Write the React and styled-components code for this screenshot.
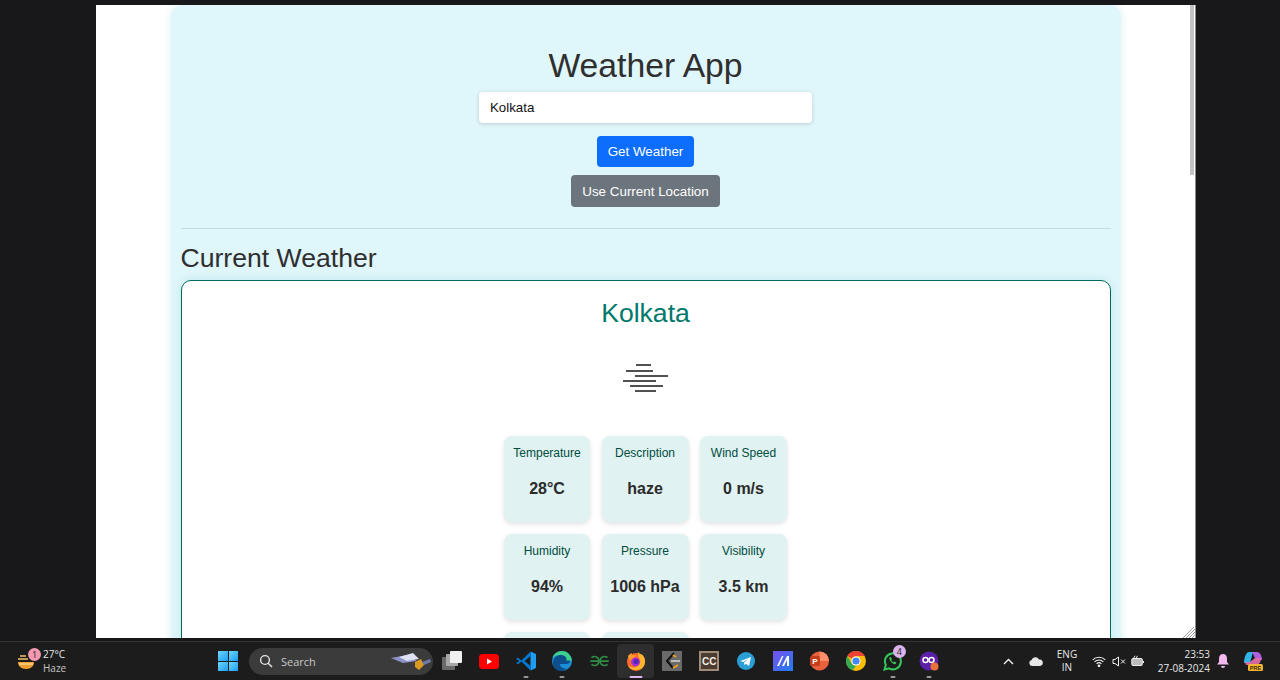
import React from "react";
import styled, { createGlobalStyle } from "styled-components";

const Global = createGlobalStyle`
  html, body { margin: 0; padding: 0; background: #18181a; overflow: hidden; }
  * { box-sizing: border-box; }
`;

const Desktop = styled.div`
  width: 1280px;
  height: 680px;
  display: flex;
  flex-direction: column;
  overflow: hidden;
  background: #18181a;
`;
const WindowArea = styled.div`
  height: 641px;
  padding: 5px 84px 3px 96px;
`;
const Browser = styled.div`
  position: relative;
  width: 1100px;
  height: 633px;
  background: #fff;
  overflow: hidden;
  border-right: 1px solid #8c8c8c;
`;
const Scrollbar = styled.div`
  position: absolute;
  top: 0;
  right: 1px;
  width: 4px;
  height: 170px;
  background: #c4c4c4;
`;
const Grip = styled.svg`
  position: absolute;
  right: 0;
  bottom: 0;
`;
const Card = styled.main`
  width: 950px;
  margin: 0 auto;
  padding: 39px 10px 0;
  min-height: 800px;
  background: #dff6fa;
  border-radius: 12px;
  box-shadow: 0 0 10px rgba(0, 140, 160, 0.14);
  font-family: "Liberation Sans", Arial, sans-serif;
  color: #2f2f2f;
`;
const Title = styled.h1`
  margin: 0 0 5px;
  font-size: 33.7px;
  line-height: 43px;
  font-weight: 400;
  text-align: center;
`;
const SearchForm = styled.div`
  display: flex;
  flex-direction: column;
  align-items: center;
`;
const CityInput = styled.input`
  width: 333px;
  height: 31px;
  padding: 0 11px;
  border: 0;
  border-radius: 4px;
  background: #fff;
  box-shadow: 0 1px 4px rgba(0, 0, 0, 0.16);
  font: 13.3px "Liberation Sans", Arial, sans-serif;
  color: #111;
  outline: none;
`;
const Button = styled.button`
  height: ${(p) => (p.$secondary ? "32px" : "31px")};
  margin-top: ${(p) => (p.$secondary ? "8px" : "13px")};
  padding: 0 11px;
  border: 0;
  border-radius: 4px;
  background: ${(p) => (p.$secondary ? "#6c757d" : "#0d6efd")};
  color: #fff;
  font: 13.4px "Liberation Sans", Arial, sans-serif;
`;
const Divider = styled.hr`
  height: 1px;
  margin: 21px 0 12px;
  border: 0;
  background: #c6dde0;
`;
const SectionTitle = styled.h2`
  margin: 0 0 5px;
  font-size: 26.6px;
  line-height: 34px;
  font-weight: 400;
`;
const WeatherBox = styled.section`
  padding: 17px 0 30px;
  background: #fff;
  border: 1px solid #00695c;
  border-radius: 10px;
  box-shadow: 0 0 10px rgba(0, 140, 160, 0.14);
  display: flex;
  flex-direction: column;
  align-items: center;
`;
const City = styled.h3`
  margin: 0 0 34px;
  font-size: 26.6px;
  line-height: 31px;
  font-weight: 400;
  color: #00796b;
`;
const FogIcon = styled.svg`
  display: block;
  margin-bottom: 43px;
`;
const TileGrid = styled.div`
  display: grid;
  grid-template-columns: 86px 87px 87px;
  grid-auto-rows: 86px;
  column-gap: 11.5px;
  row-gap: 12px;
`;
const Tile = styled.div`
  padding-top: 10px;
  border-radius: 8px;
  background: #e0f2f1;
  box-shadow: 0 2px 5px rgba(0, 0, 0, 0.12);
  text-align: center;
`;
const TileLabel = styled.div`
  font-size: 12px;
  line-height: 15px;
  color: #004d40;
`;
const TileValue = styled.div`
  margin-top: 18px;
  font-size: 16px;
  line-height: 20px;
  font-weight: 700;
  color: #2b2b2b;
`;

const Taskbar = styled.footer`
  height: 39px;
  display: flex;
  align-items: center;
  background: #1c1c1c;
  border-top: 1px solid #333;
  font-family: "Open Sans", "Noto Sans", sans-serif;
  color: #e8e8e8;
`;
const WeatherWidget = styled.div`
  width: 218px;
  padding-left: 17px;
  display: flex;
  align-items: center;
  gap: 8px;
`;
const WidgetIcon = styled.div`
  position: relative;
  width: 18px;
  height: 20px;
`;
const Badge = styled.span`
  position: absolute;
  top: ${(p) => p.$top}px;
  right: ${(p) => p.$right}px;
  width: 13px;
  height: 13px;
  border-radius: 50%;
  background: ${(p) => p.$color};
  color: #222;
  font-size: 9px;
  line-height: 13px;
  text-align: center;
`;
const WidgetText = styled.div`
  font-size: 10px;
  line-height: 14px;
`;
const WidgetSub = styled.div`
  color: #c4c4c4;
`;
const StartButton = styled.div`
  width: 20px;
  height: 20px;
  margin-right: 11px;
  display: grid;
  grid-template-columns: 1fr 1fr;
  gap: 1px;
`;
const StartPane = styled.span`
  background: linear-gradient(135deg, #6fd6fa, #1b9df0);
`;
const SearchPill = styled.div`
  width: 184px;
  height: 27px;
  padding: 0 0 0 10px;
  border-radius: 14px;
  background: #3b3b3b;
  display: flex;
  align-items: center;
  gap: 8px;
  font-size: 11px;
  color: #c8c8c8;
`;
const SearchLabel = styled.span`
  flex: 1;
`;
const IconRow = styled.div`
  display: flex;
  align-items: center;
  margin-left: 1px;
`;
const TaskIcon = styled.div`
  position: relative;
  width: 36.7px;
  height: 34px;
  display: flex;
  align-items: center;
  justify-content: center;
  border-radius: 4px;
  background: ${(p) => (p.$active ? "#2e2e2e" : "transparent")};
`;
const RunningBar = styled.span`
  position: absolute;
  bottom: 0;
  left: 50%;
  transform: translateX(-50%);
  width: ${(p) => (p.$active ? "13px" : "5px")};
  height: 2px;
  border-radius: 1px;
  background: ${(p) => (p.$active ? "#e0b8ef" : "#9a9a9a")};
`;
const LetterTile = styled.div`
  width: 20px;
  height: 20px;
  display: flex;
  align-items: center;
  justify-content: center;
  background: #4a3c30;
  border: 2px solid #a08c78;
  color: #f2ede6;
  font: 700 10px "Liberation Sans", sans-serif;
`;
const Tray = styled.div`
  margin-left: auto;
  padding-right: 10px;
  display: flex;
  align-items: center;
`;
const TraySlot = styled.div`
  width: ${(p) => p.$width}px;
  margin-right: ${(p) => p.$after || 0}px;
  display: flex;
  justify-content: center;
  align-items: center;
`;
const LangText = styled.div`
  font-size: 10px;
  line-height: 13px;
  text-align: center;
`;
const Clock = styled.div`
  width: 62px;
  font-size: 10px;
  line-height: 14px;
  text-align: right;
`;

const FOG_LINES = [
  [636, 651, 365],
  [626, 653, 371],
  [635, 668, 376],
  [623, 656, 381],
  [630, 663, 386],
  [635, 656, 391],
];

const STATS = [
  ["Temperature", "28°C"],
  ["Description", "haze"],
  ["Wind Speed", "0 m/s"],
  ["Humidity", "94%"],
  ["Pressure", "1006 hPa"],
  ["Visibility", "3.5 km"],
];

const Fog = () => (
  <FogIcon width="46" height="30" viewBox="623 363 46 30">
    {FOG_LINES.map(([a, b, y]) => (
      <line key={y} x1={a} x2={b} y1={y} y2={y} stroke="#505050" strokeWidth="2" />
    ))}
  </FogIcon>
);

const WidgetHaze = () => (
  <svg width="18" height="20" viewBox="0 0 18 20">
    <path d="M1 11h16c0 4-3 7-8 7s-8-3-8-7z" fill="#f0a030" />
    <path d="M3 5h6M1 8h10" stroke="#f3c36a" strokeWidth="1.6" />
    <path d="M2 13h14" stroke="#fbe0a0" strokeWidth="1.2" />
  </svg>
);

const SearchIcon = () => (
  <svg width="14" height="14" viewBox="0 0 14 14" fill="none" stroke="#e6e6e6" strokeWidth="1.4">
    <circle cx="6" cy="6" r="4.4" />
    <path d="M9.2 9.2L13 13" />
  </svg>
);

const Satellite = () => (
  <svg width="44" height="24" viewBox="0 0 44 24">
    <path d="M2 9l16-3 10 6-14 2z" fill="#8d92c9" />
    <path d="M10 8l14-4 6 6-12 2z" fill="#dfe2f3" />
    <path d="M26 13l6-3 3 6-5 5-4-3z" fill="#d99a24" />
    <path d="M33 13l8-3 1 3-7 3z" fill="#6f7aa8" />
  </svg>
);

const TaskView = () => (
  <svg width="20" height="20" viewBox="0 0 20 20">
    <rect x="0" y="6" width="13" height="13" rx="1" fill="#6a6a6a" />
    <rect x="4" y="3" width="12" height="12" rx="1" fill="#a8a8a8" />
    <rect x="8" y="0" width="12" height="12" rx="1" fill="#f0f0f0" />
  </svg>
);

const YouTube = () => (
  <svg width="20" height="15" viewBox="0 0 20 15">
    <rect width="20" height="15" rx="3.5" fill="#f00" />
    <path d="M8 4.5l5 3-5 3z" fill="#fff" />
  </svg>
);

const VSCode = () => (
  <svg width="20" height="20" viewBox="0 0 20 20">
    <path d="M14.5 0.5L20 3v14l-5.500 2.500z" fill="#1f9cf0" />
    <path d="M14.5 0.5L5.500 9.500 2 6.800 0 8l3.500 2L0 12l2 1.200 3.500-2.700 9 9V15L8.500 10l6-5z" fill="#0078d4" />
  </svg>
);

const Edge = () => (
  <svg width="20" height="20" viewBox="0 0 20 20">
    <circle cx="10" cy="10" r="10" fill="#1a8fd8" />
    <path d="M1 12C1 6 6 3.500 10.500 3.500 15 3.500 18 6.500 18 10c0 2-1.500 3-3.500 3H8c0 3 3 5 6.500 4.500C12.500 19.500 10.500 20 9 20c-4 0-8-3-8-8z" fill="#0c4f8c" />
    <path d="M20 10.500C20 5 15.500 0 10 0 5 0 1.500 3 .5 7 2.500 4.500 6 3.500 9.500 4c4 .5 5.500 3 5 5.500H18c1 0 2 .3 2 1z" fill="#3ecf8e" />
  </svg>
);

const GfG = () => (
  <svg width="21" height="12" viewBox="0 0 21 12" fill="none" stroke="#2f8d46" strokeWidth="1.7">
    <path d="M2.500 2.600A4.500 4.500 0 1 1 2.500 9.400M1.200 6.200H10" />
    <path d="M18.500 2.600A4.500 4.500 0 1 0 18.500 9.400M19.800 6.200H11" />
  </svg>
);

const Firefox = () => (
  <svg width="20" height="20" viewBox="0 0 20 20">
    <circle cx="10" cy="11" r="9" fill="#ff6a2b" />
    <path d="M19 10.500c0 5-4 8.500-9 8.500-3.500 0-6.500-1.500-8-4.500 3 2.500 7.500 2.500 10 .5 2.500-2 3-5 1.500-7.500C12.500 5.500 11.500 3.500 12 1c1 2 4 2 5 3.500 1.300 1.800 2 3.700 2 6z" fill="#ffb52e" />
    <path d="M2 5c1-1.500 2.500-2.500 4-3-.5 1 0 2 .5 2.500 1.500-.7 3-.5 4 .5-2 .5-3 1.500-3.500 2.500L3 9z" fill="#ff9a2e" />
    <circle cx="9.500" cy="11" r="4.400" fill="#a52fd6" />
    <circle cx="10" cy="10.500" r="2.600" fill="#4d2ab0" />
  </svg>
);

const LeetCode = () => (
  <svg width="20" height="20" viewBox="0 0 20 20">
    <rect width="20" height="20" fill="#6a6a6a" />
    <path d="M12 2L5 10l6 7" fill="none" stroke="#111" strokeWidth="2" />
    <path d="M9 10h9" stroke="#d0d0d0" strokeWidth="1.600" />
    <path d="M11 17l5-3M11 4l3 2" stroke="#f0a020" strokeWidth="2" />
  </svg>
);

const Telegram = () => (
  <svg width="18" height="18" viewBox="0 0 18 18">
    <circle cx="9" cy="9" r="9" fill="#2a9fd6" />
    <path d="M3.500 9L14 5l-2 9-3-2.200-1.500 1.500L7 10.500l4.500-3.500L6 10z" fill="#fff" />
  </svg>
);

const Maze = () => (
  <svg width="20" height="20" viewBox="0 0 20 20">
    <defs>
      <linearGradient id="mz" x1="0" y1="0" x2="1" y2="1">
        <stop offset="0" stopColor="#7a4ff0" />
        <stop offset="1" stopColor="#1f7df0" />
      </linearGradient>
    </defs>
    <rect width="20" height="20" fill="url(#mz)" />
    <path d="M4 15L9 5h1.500L6 15zM9 15l5-10h2v10h-2V9l-3 6z" fill="#fff" />
  </svg>
);

const PowerPoint = () => (
  <svg width="20" height="20" viewBox="0 0 20 20">
    <circle cx="10.500" cy="10" r="9.500" fill="#e8603c" />
    <path d="M10.500 .5a9.500 9.500 0 0 1 9.500 9.500h-9.500z" fill="#ff8f6b" />
    <rect x="1" y="5" width="10" height="10" rx="1.500" fill="#c43e1c" />
    <text x="6" y="13" fontSize="8" fontWeight="700" fontFamily="Liberation Sans" fill="#fff" textAnchor="middle">P</text>
  </svg>
);

const Chrome = () => (
  <svg width="20" height="20" viewBox="0 0 20 20">
    <circle cx="10" cy="10" r="10" fill="#fbbc04" />
    <path d="M10 0a10 10 0 0 1 8.660 5H10a5 5 0 0 0-4.330 2.500L1.340 5A10 10 0 0 1 10 0z" fill="#ea4335" />
    <path d="M1.340 5l4.330 7.500A5 5 0 0 0 10 15l-3.600 4.300A10 10 0 0 1 1.340 5z" fill="#34a853" />
    <circle cx="10" cy="10" r="4.600" fill="#fff" />
    <circle cx="10" cy="10" r="3.600" fill="#4285f4" />
  </svg>
);

const WhatsApp = () => (
  <svg width="20" height="20" viewBox="0 0 20 20" fill="none">
    <path d="M1.500 18.500l1.300-4.500A8 8 0 1 1 6 17.300z" stroke="#34c759" strokeWidth="2" />
    <path d="M7 6c-1 1-.8 2.500.8 4.500s3.400 3 4.700 2.500l1-1.200-2-1.300-.9.800c-1-.4-1.900-1.400-2.300-2.400l.7-.9L7.800 6z" fill="#34c759" />
  </svg>
);

const Infinity8 = () => (
  <svg width="20" height="20" viewBox="0 0 20 20">
    <circle cx="10" cy="10" r="9.500" fill="#5b1fa8" />
    <circle cx="6.500" cy="9" r="2.500" fill="none" stroke="#fff" strokeWidth="1.500" />
    <circle cx="12.500" cy="9" r="2.500" fill="none" stroke="#fff" strokeWidth="1.500" />
    <circle cx="15.500" cy="15.500" r="4" fill="#e8703c" />
  </svg>
);

const Chevron = () => (
  <svg width="11" height="7" viewBox="0 0 11 7" fill="none" stroke="#f0f0f0" strokeWidth="1.400">
    <path d="M1 6l4.500-4.500L10 6" />
  </svg>
);

const Cloud = () => (
  <svg width="14" height="9" viewBox="0 0 14 9">
    <path d="M3 9a3 3 0 0 1-.4-5.900A4 4 0 0 1 10 2.500 3.200 3.200 0 0 1 11 9z" fill="#e6e6e6" />
  </svg>
);

const Wifi = () => (
  <svg width="14" height="11" viewBox="0 0 14 11" fill="none" stroke="#f0f0f0" strokeWidth="1.100">
    <path d="M.7 3.800a9 9 0 0 1 12.600 0M2.600 5.800a6.300 6.300 0 0 1 8.800 0M4.600 7.800a3.500 3.500 0 0 1 4.800 0" />
    <circle cx="7" cy="9.800" r=".8" fill="#f0f0f0" />
  </svg>
);

const Mute = () => (
  <svg width="14" height="11" viewBox="0 0 14 11" fill="none" stroke="#f0f0f0" strokeWidth="1">
    <path d="M1 3.500h2L6.500 1v9L3 7.500H1z" />
    <path d="M9 3.500l4 4M13 3.500l-4 4" />
  </svg>
);

const Battery = () => (
  <svg width="14" height="12" viewBox="0 0 14 12" fill="none" stroke="#f0f0f0" strokeWidth="1">
    <rect x=".8" y="3.500" width="10.500" height="7" rx="1" fill="#bcbcbc" />
    <path d="M12.500 6v2M2.500 3.500L4 .8M5 3.500L6.500 .8" />
  </svg>
);

const Bell = () => (
  <svg width="12" height="14" viewBox="0 0 12 14">
    <path d="M6 0c2.600 0 4 2 4 4.500V8l2 2.500H0L2 8V4.500C2 2 3.400 0 6 0z" fill="#f0b8ec" />
    <path d="M4 12h4a2 2 0 0 1-4 0z" fill="#f0b8ec" />
  </svg>
);

const Copilot = () => (
  <svg width="20" height="20" viewBox="0 0 20 20">
    <path d="M6 1h4L7 12H1C1 7 3 1 6 1z" fill="#2fb5e8" />
    <path d="M9 1h5c3 0 5 4 5 8h-6z" fill="#b05fe0" />
    <path d="M2 11h5l5-4h6c0 4-2 7-5 7H3z" fill="#e86fa8" opacity=".9" />
    <rect x="5" y="13" width="15" height="7" rx="1.500" fill="#f2b632" />
    <text x="12.500" y="18.700" fontSize="5.500" fontWeight="700" fontFamily="Liberation Sans" fill="#3a2a05" textAnchor="middle">PRE</text>
  </svg>
);

const TASK_APPS = [
  { key: "view", icon: <TaskView /> },
  { key: "yt", icon: <YouTube /> },
  { key: "code", icon: <VSCode />, running: true },
  { key: "edge", icon: <Edge />, running: true },
  { key: "gfg", icon: <GfG /> },
  { key: "ff", icon: <Firefox />, running: true, active: true },
  { key: "lc", icon: <LeetCode /> },
  { key: "cc", icon: <LetterTile>CC</LetterTile> },
  { key: "tg", icon: <Telegram /> },
  { key: "maze", icon: <Maze /> },
  { key: "ppt", icon: <PowerPoint /> },
  { key: "chrome", icon: <Chrome /> },
  { key: "wa", icon: <WhatsApp />, running: true, badge: "4" },
  { key: "inf", icon: <Infinity8 />, running: true },
];

export default function App() {
  return (
    <Desktop>
      <Global />
      <WindowArea>
        <Browser>
          <Card>
            <Title>Weather App</Title>
            <SearchForm>
              <CityInput defaultValue="Kolkata" />
              <Button>Get Weather</Button>
              <Button $secondary>Use Current Location</Button>
            </SearchForm>
            <Divider />
            <SectionTitle>Current Weather</SectionTitle>
            <WeatherBox>
              <City>Kolkata</City>
              <Fog />
              <TileGrid>
                {STATS.map(([label, value]) => (
                  <Tile key={label}>
                    <TileLabel>{label}</TileLabel>
                    <TileValue>{value}</TileValue>
                  </Tile>
                ))}
                <Tile />
                <Tile />
              </TileGrid>
            </WeatherBox>
          </Card>
          <Scrollbar />
          <Grip width="12" height="11" viewBox="0 0 12 11" stroke="#a0a0a0" strokeWidth="1">
            <path d="M0 11L12 -1M3 11L12 2M6 11l6-6M9 11l3-3" />
          </Grip>
        </Browser>
      </WindowArea>
      <Taskbar>
        <WeatherWidget>
          <WidgetIcon>
            <WidgetHaze />
            <Badge $top={-3} $right={-6} $color="#f49ab0">1</Badge>
          </WidgetIcon>
          <WidgetText>
            27°C
            <WidgetSub>Haze</WidgetSub>
          </WidgetText>
        </WeatherWidget>
        <StartButton>
          <StartPane />
          <StartPane />
          <StartPane />
          <StartPane />
        </StartButton>
        <SearchPill>
          <SearchIcon />
          <SearchLabel>Search</SearchLabel>
          <Satellite />
        </SearchPill>
        <IconRow>
          {TASK_APPS.map((app) => (
            <TaskIcon key={app.key} $active={app.active}>
              {app.icon}
              {app.badge && <Badge $top={1} $right={5} $color="#d9b3ea">{app.badge}</Badge>}
              {app.running && <RunningBar $active={app.active} />}
            </TaskIcon>
          ))}
        </IconRow>
        <Tray>
          <TraySlot $width={28}><Chevron /></TraySlot>
          <TraySlot $width={28}><Cloud /></TraySlot>
          <TraySlot $width={34} $after={5}>
            <LangText>ENG<br />IN</LangText>
          </TraySlot>
          <TraySlot $width={20}><Wifi /></TraySlot>
          <TraySlot $width={19}><Mute /></TraySlot>
          <TraySlot $width={20}><Battery /></TraySlot>
          <Clock>
            23:53
            <br />
            27-08-2024
          </Clock>
          <TraySlot $width={26}><Bell /></TraySlot>
          <TraySlot $width={34}><Copilot /></TraySlot>
        </Tray>
      </Taskbar>
    </Desktop>
  );
}
